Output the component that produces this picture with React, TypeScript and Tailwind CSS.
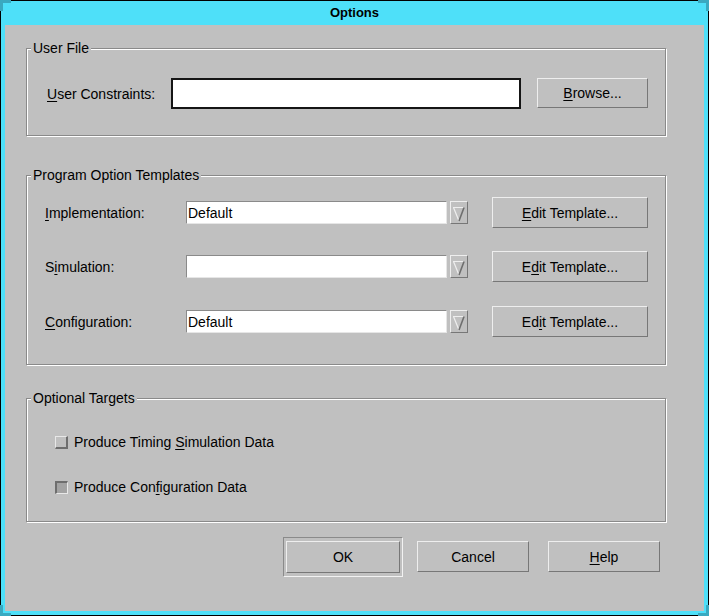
import React from "react";

const font = { fontFamily: '"Liberation Sans", Arial, sans-serif' };

function U({ children }: { children: React.ReactNode }) {
  return <span className="underline underline-offset-2 decoration-1">{children}</span>;
}

function Btn({ children, className = "" }: { children: React.ReactNode; className?: string }) {
  return (
    <div className={`flex items-center justify-center bg-[#c0c0c0] border border-t-[#eeeeee] border-l-[#eeeeee] border-b-[#777777] border-r-[#777777] text-[14px] leading-4 text-black ${className}`}>
      {children}
    </div>
  );
}

function Group({ title, className = "", children }: { title: string; className?: string; children: React.ReactNode }) {
  return (
    <div className={`relative w-[640px] border border-[#8a8a8a] shadow-[1px_1px_0_#fff,inset_1px_1px_0_#fff] ${className}`}>
      <span className="absolute left-[4px] top-[-9px] bg-[#c0c0c0] px-[2px] text-[14px] leading-4 text-black">{title}</span>
      {children}
    </div>
  );
}

function Combo({ value }: { value: string }) {
  return (
    <div className="flex items-center">
      <div className="w-[261px] h-[23px] bg-white border border-t-[#8a8a8a] border-l-[#8a8a8a] border-b-[#e6e6e6] border-r-[#e6e6e6] pl-[1px] flex items-center text-[14px] leading-4 text-black">
        {value}
      </div>
      <div className="ml-[3px] w-[18px] h-[23px] border border-t-[#eeeeee] border-l-[#eeeeee] border-b-[#777777] border-r-[#777777] bg-[#c0c0c0]">
        <svg width="16" height="21" viewBox="0 0 16 21">
          <line x1="2" y1="5.5" x2="13" y2="5.5" stroke="#eeeeee" strokeWidth="1" />
          <line x1="2.5" y1="5.5" x2="8" y2="19" stroke="#eeeeee" strokeWidth="1.2" />
          <line x1="13" y1="5.5" x2="8" y2="19" stroke="#6e6e6e" strokeWidth="1.6" />
        </svg>
      </div>
    </div>
  );
}

function Check({ checked, children }: { checked?: boolean; children: React.ReactNode }) {
  return (
    <div className="flex items-center h-4">
      <div
        className={
          checked
            ? "w-[13px] h-[13px] bg-[#a3a3a3] border-2 border-t-[#6e6e6e] border-l-[#6e6e6e] border-b-[#e8e8e8] border-r-[#e8e8e8] border-b-[1px] border-r-[1px]"
            : "w-[13px] h-[13px] bg-[#c0c0c0] border-2 border-t-[#e8e8e8] border-l-[#e8e8e8] border-b-[#6e6e6e] border-r-[#6e6e6e] border-t-[1px] border-l-[1px]"
        }
      />
      <span className="ml-[6px] text-[14px] leading-4 text-black">{children}</span>
    </div>
  );
}

export default function App() {
  const rows: { label: React.ReactNode; value: string; btn: React.ReactNode }[] = [
    { label: <><U>I</U>mplementation:</>, value: "Default", btn: <><U>E</U>dit Template...</> },
    { label: <>S<U>i</U>mulation:</>, value: "", btn: <>E<U>d</U>it Template...</> },
    { label: <><U>C</U>onfiguration:</>, value: "Default", btn: <>Ed<U>i</U>t Template...</> },
  ];

  return (
    <div style={font} className="relative w-[709px] h-[616px] border border-black bg-[#4ee0f9] flex flex-col">
      {/* resize corner handles */}
      <div className="absolute left-[-1px] top-[-1px] w-[11px] h-[11px] border-t-[3px] border-l-[3px] border-[#3aa9c0]" />
      <div className="absolute right-[-1px] top-[-1px] w-[11px] h-[11px] border-t-[3px] border-r-[3px] border-[#3aa9c0]" />
      <div className="absolute left-[-1px] bottom-[-1px] w-[11px] h-[11px] border-b-[3px] border-l-[3px] border-[#3aa9c0]" />
      <div className="absolute right-[-1px] bottom-[-1px] w-[11px] h-[11px] border-b-[3px] border-r-[3px] border-[#3aa9c0]" />

      <div className="h-[24px] flex items-center justify-center text-[13px] font-bold text-black">Options</div>

      <div className="ml-[4px] w-[699px] h-[586px] bg-[#c0c0c0] pl-[21px] flex flex-col">
        <Group title="User File" className="mt-[23px] h-[88px]">
          <div className="flex items-start pt-[29px] pl-[20px]">
            <div className="w-[124px] h-[31px] flex items-center text-[14px] leading-4 text-black">
              <span><U>U</U>ser Constraints:</span>
            </div>
            <div className="w-[350px] h-[31px] bg-white border-2 border-[#151515]" />
            <Btn className="ml-[16px] w-[111px] h-[30px]"><U>B</U>rowse...</Btn>
          </div>
        </Group>

        <Group title="Program Option Templates" className="mt-[39px] h-[190px]">
          <div className="pt-[21px] pl-[18px] flex flex-col">
            {rows.map((r, i) => (
              <div key={i} className={`flex items-center h-[31px] ${i === 1 ? "mt-[23px]" : i === 2 ? "mt-[24px]" : ""}`}>
                <div className="w-[141px] text-[14px] leading-4 text-black">{r.label}</div>
                <Combo value={r.value} />
                <Btn className="ml-[24px] w-[156px] h-[31px]">{r.btn}</Btn>
              </div>
            ))}
          </div>
        </Group>

        <Group title="Optional Targets" className="mt-[33px] h-[124px]">
          <div className="pt-[35px] pl-[28px] flex flex-col">
            <Check>Produce Timing <U>S</U>imulation Data</Check>
            <div className="mt-[29px]">
              <Check checked>Produce Con<U>f</U>iguration Data</Check>
            </div>
          </div>
        </Group>

        <div className="mt-[15px] ml-[257px] flex items-start">
          <div className="w-[120px] h-[40px] border border-t-[#8a8a8a] border-l-[#8a8a8a] border-b-[#f2f2f2] border-r-[#f2f2f2] pl-[2px] pt-[3px]">
            <Btn className="w-[114px] h-[32px]">OK</Btn>
          </div>
          <Btn className="ml-[14px] mt-[4px] w-[112px] h-[31px]">Cancel</Btn>
          <Btn className="ml-[19px] mt-[4px] w-[112px] h-[31px]"><U>H</U>elp</Btn>
        </div>
      </div>
    </div>
  );
}
